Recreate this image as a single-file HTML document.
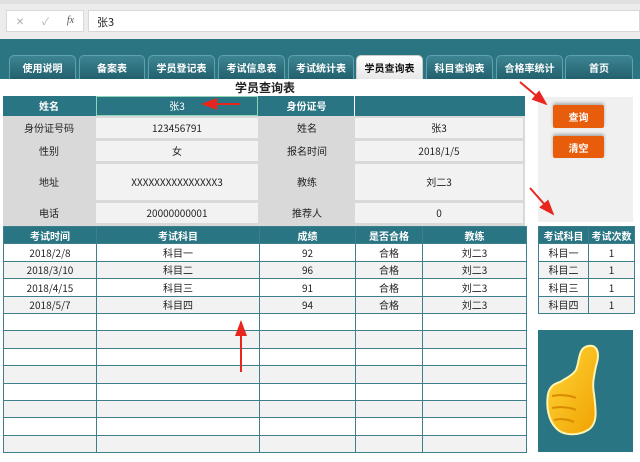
<!DOCTYPE html>
<html><head><meta charset="utf-8"><style>
*{margin:0;padding:0;box-sizing:border-box}
body{width:640px;height:462px;overflow:hidden;background:#fff;font-family:"Noto Sans CJK SC","Liberation Sans",sans-serif;font-size:10px;color:#222;position:relative}
.a{position:absolute}
.c{display:flex;align-items:center;justify-content:center;line-height:1}
.tab{position:absolute;top:55px;height:24px;background:linear-gradient(#3d8593,#23606d);border:1px solid #5fa0ad;border-bottom:none;border-radius:5px 5px 0 0;color:#fff;font-weight:bold;font-size:10px;display:flex;align-items:center;justify-content:center}
.tab.on{background:linear-gradient(#fff,#e8e8e8);color:#111;border-color:#ccc}
.h{background:#2a7584;color:#fff;font-weight:bold}
.w{background:#f2f2f2}
table{border-collapse:collapse;position:absolute;table-layout:fixed}
td{border:1px solid #3e7f8c;text-align:center;font-size:10px;padding:0;line-height:15px;height:17.4px;vertical-align:middle;overflow:hidden;white-space:nowrap}
.btn{position:absolute;background:#e85d0c;color:#fff;font-weight:bold;border-radius:2px;box-shadow:0 -2px 3px #aaa;display:flex;align-items:center;justify-content:center;font-size:10px}
</style></head><body>
<div class="a" style="left:0;top:0;width:640px;height:39px;background:#ececec"></div>
<div class="a" style="left:0;top:0;width:640px;height:4px;background:#e0e0e0"></div>
<div class="a c" style="left:6px;top:10px;width:78px;height:22px;background:#fff;border:1px solid #d8d8d8;color:#aaa;font-size:10px;justify-content:space-around"><span>✕</span><span>✓</span><span style="color:#555;font-style:italic;font-family:'Liberation Serif'">fx</span></div>
<div class="a" style="left:88px;top:10px;width:552px;height:22px;background:#fff;border:1px solid #d8d8d8;padding:3px 8px;font-size:11px">张3</div>
<div class="a" style="left:0;top:39px;width:640px;height:40px;background:#2b7482"></div>
<div class="tab" style="left:9px;width:67px">使用说明</div>
<div class="tab" style="left:79px;width:66px">备案表</div>
<div class="tab" style="left:148px;width:67px">学员登记表</div>
<div class="tab" style="left:218px;width:67px">考试信息表</div>
<div class="tab" style="left:288px;width:66px">考试统计表</div>
<div class="tab on" style="left:356px;width:67px">学员查询表</div>
<div class="tab" style="left:426px;width:67px">科目查询表</div>
<div class="tab" style="left:496px;width:67px">合格率统计</div>
<div class="tab" style="left:565px;width:68px">首页</div>
<div class="a" style="left:200px;top:79px;width:130px;text-align:center;font-weight:bold;font-size:12px">学员查询表</div>

<div class="a" style="left:3px;top:96px;width:522px;height:130px;background:#d9d9d9"></div>
<div class="a h" style="left:3px;top:96px;width:522px;height:20px"></div>
<div class="a c" style="left:3px;top:96px;width:92px;height:20px;color:#fff;font-weight:bold">姓名</div>
<div class="a c" style="left:96px;top:96px;width:162px;height:20px;color:#fff;border:1px solid #8fd4b8">张3</div>
<div class="a c" style="left:259px;top:96px;width:96px;height:20px;color:#fff;font-weight:bold;border-right:1px solid #fff">身份证号</div>

<div class="a c" style="left:3px;top:118px;width:92px;height:20px">身份证号码</div>
<div class="a c w" style="left:96px;top:118px;width:162px;height:20px">123456791</div>
<div class="a c" style="left:259px;top:118px;width:96px;height:20px">姓名</div>
<div class="a c w" style="left:355px;top:118px;width:168px;height:20px">张3</div>
<div class="a c" style="left:3px;top:141px;width:92px;height:20px">性别</div>
<div class="a c w" style="left:96px;top:141px;width:162px;height:20px">女</div>
<div class="a c" style="left:259px;top:141px;width:96px;height:20px">报名时间</div>
<div class="a c w" style="left:355px;top:141px;width:168px;height:20px">2018/1/5</div>
<div class="a c" style="left:3px;top:164px;width:92px;height:36px">地址</div>
<div class="a c w" style="left:96px;top:164px;width:162px;height:36px">XXXXXXXXXXXXXXX3</div>
<div class="a c" style="left:259px;top:164px;width:96px;height:36px">教练</div>
<div class="a c w" style="left:355px;top:164px;width:168px;height:36px">刘二3</div>
<div class="a c" style="left:3px;top:203px;width:92px;height:20px">电话</div>
<div class="a c w" style="left:96px;top:203px;width:162px;height:20px">20000000001</div>
<div class="a c" style="left:259px;top:203px;width:96px;height:20px">推荐人</div>
<div class="a c w" style="left:355px;top:203px;width:168px;height:20px">0</div>

<div class="a" style="left:538px;top:97px;width:95px;height:125px;background:#f0f0f0"></div>
<div class="btn" style="left:553px;top:105px;width:51px;height:23px">查询</div>
<div class="btn" style="left:553px;top:136px;width:51px;height:22px">清空</div>

<table style="left:3px;top:226px;width:523px">
<colgroup><col style="width:93px"><col style="width:163px"><col style="width:96px"><col style="width:67px"><col style="width:104px"></colgroup>
<tr class="h"><td>考试时间</td><td>考试科目</td><td>成绩</td><td>是否合格</td><td>教练</td></tr>
<tr><td>2018/2/8</td><td>科目一</td><td>92</td><td>合格</td><td>刘二3</td></tr>
<tr class="w"><td>2018/3/10</td><td>科目二</td><td>96</td><td>合格</td><td>刘二3</td></tr>
<tr><td>2018/4/15</td><td>科目三</td><td>91</td><td>合格</td><td>刘二3</td></tr>
<tr class="w"><td>2018/5/7</td><td>科目四</td><td>94</td><td>合格</td><td>刘二3</td></tr>
<tr><td></td><td></td><td></td><td></td><td></td></tr>
<tr class="w"><td></td><td></td><td></td><td></td><td></td></tr>
<tr><td></td><td></td><td></td><td></td><td></td></tr>
<tr class="w"><td></td><td></td><td></td><td></td><td></td></tr>
<tr><td></td><td></td><td></td><td></td><td></td></tr>
<tr class="w"><td></td><td></td><td></td><td></td><td></td></tr>
<tr><td></td><td></td><td></td><td></td><td></td></tr>
<tr class="w"><td></td><td></td><td></td><td></td><td></td></tr>
</table>

<table style="left:538px;top:226px;width:96px">
<colgroup><col style="width:50px"><col style="width:46px"></colgroup>
<tr class="h"><td>考试科目</td><td>考试次数</td></tr>
<tr><td>科目一</td><td>1</td></tr>
<tr class="w"><td>科目二</td><td>1</td></tr>
<tr><td>科目三</td><td>1</td></tr>
<tr class="w"><td>科目四</td><td>1</td></tr>
</table>

<div class="a" style="left:538px;top:330px;width:95px;height:122px;background:#2a7584"></div>
<svg class="a" style="left:538px;top:330px" width="95" height="122" viewBox="0 0 95 122">
<defs><linearGradient id="g" x1="0" y1="0" x2="1" y2="1"><stop offset="0" stop-color="#ffd93a"/><stop offset="1" stop-color="#f0a000"/></linearGradient></defs>
<path d="M22 52 C28 48 34 46 38 40 C42 30 40 18 50 16 C60 14 62 24 58 36 C56 46 54 54 56 64 C58 80 60 94 50 100 C40 106 25 106 18 98 C10 90 8 76 10 64 C12 56 16 54 22 52 Z" fill="url(#g)" stroke="#fff3b0" stroke-width="2"/>
<path d="M14 66 C24 64 34 66 38 68 M14 78 C24 76 34 78 38 80 M16 90 C24 88 32 90 36 92" stroke="#d98a00" stroke-width="2" fill="none"/>
</svg>

<svg class="a" style="left:0;top:0" width="640" height="462">
<defs><marker id="m" markerWidth="8" markerHeight="6" refX="7" refY="3" orient="auto"><path d="M0 0 L8 3 L0 6 Z" fill="#e8261e"/></marker></defs>
<g stroke="#e8261e" stroke-width="2" fill="none" marker-end="url(#m)">
<line x1="240" y1="104" x2="203" y2="104"/>
<line x1="241" y1="372" x2="241" y2="322"/>
<line x1="520" y1="82" x2="546" y2="104"/>
<line x1="530" y1="188" x2="553" y2="214"/>
</g></svg>
</body></html>
